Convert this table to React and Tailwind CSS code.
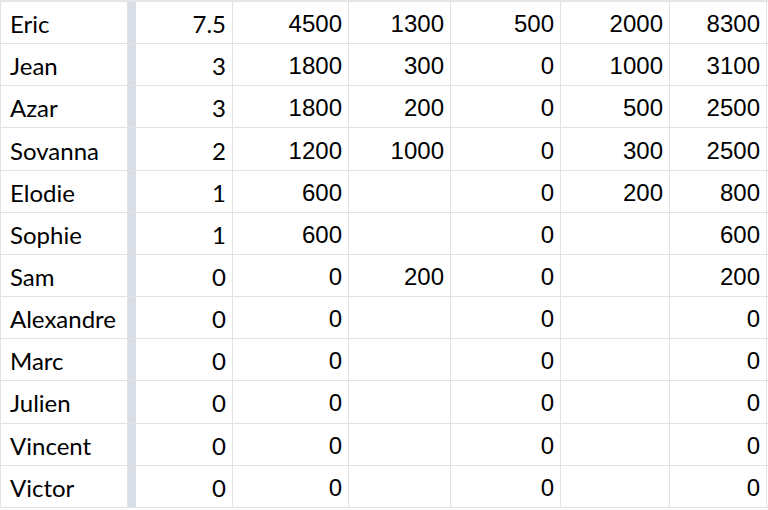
import React from "react";

const rows = [
  ["Eric", "7.5", "4500", "1300", "500", "2000", "8300"],
  ["Jean", "3", "1800", "300", "0", "1000", "3100"],
  ["Azar", "3", "1800", "200", "0", "500", "2500"],
  ["Sovanna", "2", "1200", "1000", "0", "300", "2500"],
  ["Elodie", "1", "600", "", "0", "200", "800"],
  ["Sophie", "1", "600", "", "0", "", "600"],
  ["Sam", "0", "0", "200", "0", "", "200"],
  ["Alexandre", "0", "0", "", "0", "", "0"],
  ["Marc", "0", "0", "", "0", "", "0"],
  ["Julien", "0", "0", "", "0", "", "0"],
  ["Vincent", "0", "0", "", "0", "", "0"],
  ["Victor", "0", "0", "", "0", "", "0"],
];

// widths of the number columns, border included
const numWidths = ["w-[116px]", "w-[102px]", "w-[110px]", "w-[109px]", "w-[97px]"];

const App = () => {
  return (
    <div className="w-[768px] h-[510px] overflow-hidden bg-white text-black">
      <div className="h-[2px] bg-[#e4e6ec]" />
      {rows.map((row, i) => (
        <div key={i} className="flex h-[42.17px] border-b border-[#e2e2e2]">
          {/* name */}
          <div className="w-[128px] shrink-0 border-l border-r border-[#e2e2e2] flex items-center pl-[9px] pt-[3px] text-[24px] font-[family-name:Lato,sans-serif]">
            {row[0]}
          </div>
          {/* frozen column divider */}
          <div className="w-[8px] shrink-0 bg-[#d9dde6]" />
          {/* first value, same font as names */}
          <div className="w-[97px] shrink-0 border-r border-[#e2e2e2] flex items-center justify-end pr-[6px] pt-[3px] text-[24px] font-[family-name:Lato,sans-serif]">
            {row[1]}
          </div>
          {row.slice(2).map((v, j) => (
            <div
              key={j}
              className={
                numWidths[j] +
                " shrink-0 border-r border-[#e2e2e2] flex items-center justify-end pr-[6px] pt-[3px] text-[24px] font-[family-name:Liberation_Sans,Arial,sans-serif]"
              }
            >
              {v}
            </div>
          ))}
          <div className="flex-1" />
        </div>
      ))}
    </div>
  );
};

export default App;
